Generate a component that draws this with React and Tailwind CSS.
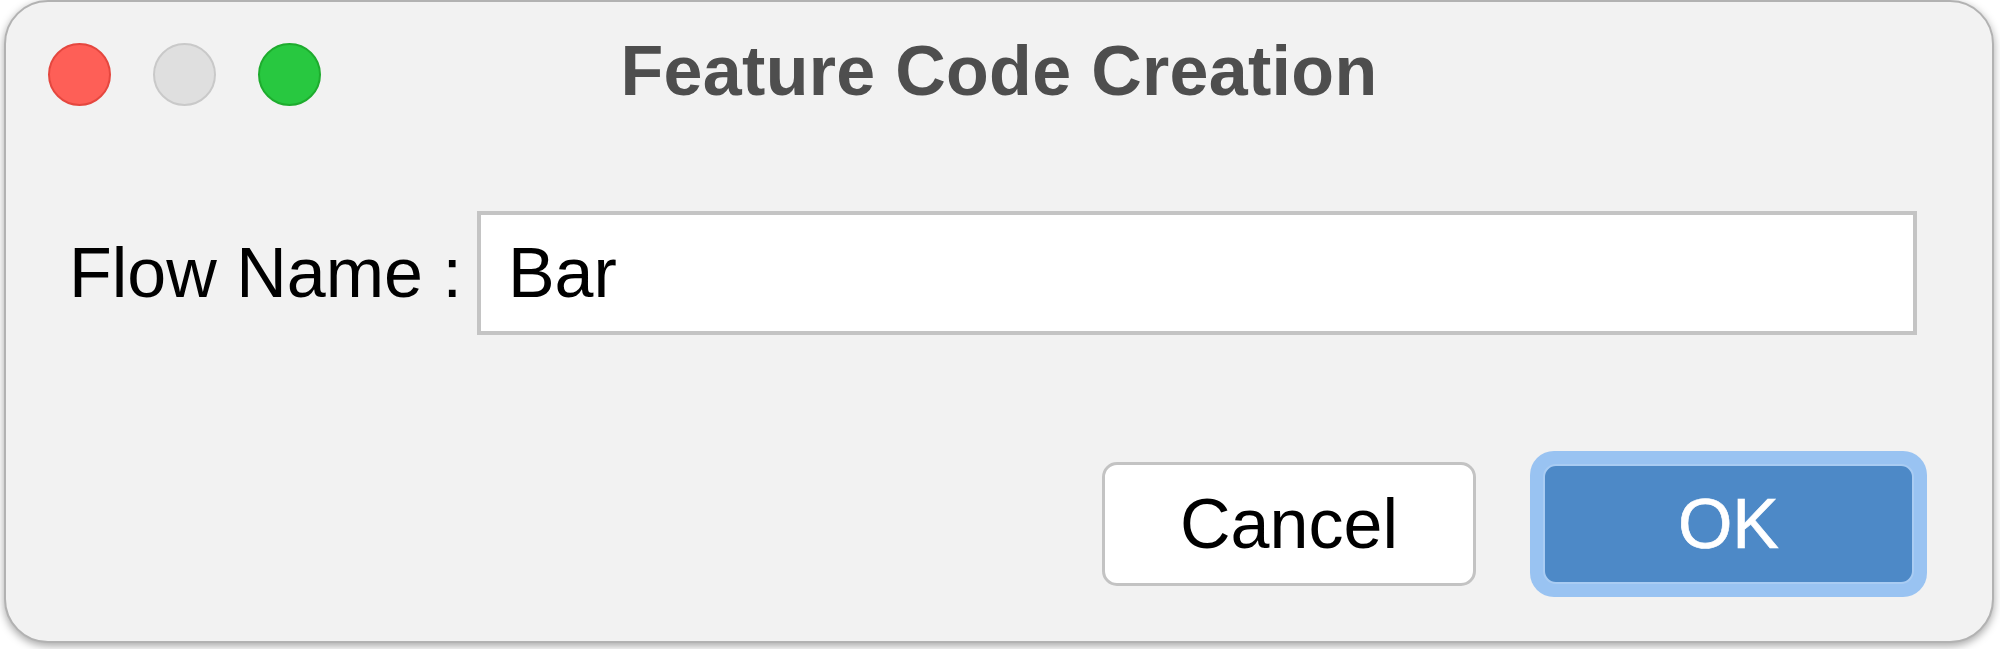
export default function App() {
  const font = { fontFamily: '"Liberation Sans", Arial, Helvetica, sans-serif' };
  return (
    <div className="w-[2000px] h-[649px] bg-white overflow-hidden" style={font}>
      <div className="ml-[4px] w-[1990px] h-[643px] border-2 border-[#b2b2b2] rounded-[44px] bg-[#f2f2f2] shadow-[0_3px_8px_rgba(0,0,0,0.35)] flex flex-col">
        {/* Title bar */}
        <div className="h-[144px] grid grid-cols-[1fr_auto_1fr] items-center">
          <div className="flex items-center gap-[42px] pl-[42px]">
            <div className="w-[63px] h-[63px] rounded-full bg-[#fe5f57] border-2 border-[#e5473f]" />
            <div className="w-[63px] h-[63px] rounded-full bg-[#dfdfdf] border-2 border-[#c9c9c9]" />
            <div className="w-[63px] h-[63px] rounded-full bg-[#28c840] border-2 border-[#1eac2e]" />
          </div>
          <div className="text-[70px] leading-none font-bold text-[#4e4e4e] mb-[7px] tracking-[0.3px] whitespace-nowrap">
            Feature Code Creation
          </div>
          <div />
        </div>

        {/* Field row */}
        <div className="mt-[65px] flex items-center pl-[63px] gap-[15px]">
          <div className="text-[70px] leading-none text-black whitespace-nowrap">Flow Name :</div>
          <div className="w-[1440px] h-[124px] border-4 border-[#c4c4c4] bg-white flex items-center pl-[27px]">
            <span className="text-[70px] leading-none text-black">Bar</span>
          </div>
        </div>

        {/* Buttons row */}
        <div className="mt-[116px] h-[146px] flex items-center justify-end pr-[65px] gap-[54px]">
          <div className="w-[374px] h-[124px] border-[3px] border-[#c3c3c3] rounded-[15px] bg-white flex items-center justify-center">
            <span className="text-[70px] leading-none text-black">Cancel</span>
          </div>
          <div className="w-[397px] h-[146px] rounded-[24px] bg-[#99c3f2] p-[13px]">
            <div className="w-full h-full rounded-[13px] bg-[#4d89c7] border-2 border-[#a9ccf3] flex items-center justify-center">
              <span className="text-[70px] leading-none text-white [-webkit-text-stroke:0.6px_white]">OK</span>
            </div>
          </div>
        </div>
      </div>
    </div>
  );
}
